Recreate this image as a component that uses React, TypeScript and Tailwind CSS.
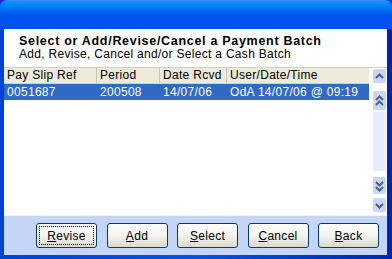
import React from "react";

function Chevron({ dir, double }: { dir: "up" | "down"; double?: boolean }) {
  const single = dir === "up" ? "M3 7 L6.5 3.5 L10 7" : "M3 4 L6.5 7.5 L10 4";
  if (!double) {
    return (
      <svg width="13" height="11" viewBox="0 0 13 11">
        <path d={single} fill="none" stroke="#4d6185" strokeWidth="2" />
      </svg>
    );
  }
  const a = dir === "up" ? "M3 7 L6.5 3.5 L10 7" : "M3 4 L6.5 7.5 L10 4";
  const b = dir === "up" ? "M3 12 L6.5 8.5 L10 12" : "M3 9 L6.5 12.5 L10 9";
  return (
    <svg width="13" height="16" viewBox="0 0 13 16">
      <path d={a} fill="none" stroke="#4d6185" strokeWidth="2" />
      <path d={b} fill="none" stroke="#4d6185" strokeWidth="2" />
    </svg>
  );
}

function Btn({ label, u, focus }: { label: string; u: number; focus?: boolean }) {
  return (
    <div className="w-[61px] h-[25px] rounded-[3px] border border-[#003c74] bg-gradient-to-b from-[#ffffff] via-[#f4f3ee] to-[#dcd9cc] flex items-center justify-center p-[2px]">
      <div
        className={
          "w-full h-full flex items-center justify-center text-[12px] tracking-[0.3px] text-black " +
          (focus ? "border border-dotted border-black" : "")
        }
      >
        <span>
          {label.slice(0, u)}
          <span className="underline">{label.slice(u, u + 1)}</span>
          {label.slice(u + 1)}
        </span>
      </div>
    </div>
  );
}

export default function App() {
  return (
    <div
      className="w-[392px] h-[259px] flex flex-col overflow-hidden bg-[#0831d9]"
      style={{ fontFamily: '"Liberation Sans", Arial, sans-serif' }}
    >
      <div className="h-[29px] shrink-0 rounded-t-[7px] bg-gradient-to-b from-[#0997ff] via-[#0053ee] to-[#0050ee] border-t border-[#3b8cf5]" />
      <div className="flex-1 flex flex-col pl-[4px] pr-[5px] pb-[4px] bg-gradient-to-r from-[#0041d8] via-[#0054e3] to-[#0025b0]">
        <div className="h-[38px] bg-white pl-[15px] pt-[6px] leading-[13px]">
          <div className="text-[12.5px] font-bold tracking-[0.7px] text-black">Select or Add/Revise/Cancel a Payment Batch</div>
          <div className="text-[12px] tracking-[0.3px] text-black">Add, Revise, Cancel and/or Select a Cash Batch</div>
        </div>
        <div className="h-[148px] bg-white flex border-t border-[#d4d0c8]">
          <div className="flex-1 flex flex-col text-[12px] tracking-[0.3px]">
            <div className="h-[16px] flex bg-[#ebeadb] border-b border-[#d6d2c2] text-black leading-[15px]">
              <div className="w-[93px] pl-[3px] border-r border-[#c7c5b2]">Pay Slip Ref</div>
              <div className="w-[63px] pl-[3px] border-r border-[#c7c5b2]">Period</div>
              <div className="w-[67px] pl-[3px] border-r border-[#c7c5b2]">Date Rcvd</div>
              <div className="flex-1 pl-[3px]">User/Date/Time</div>
            </div>
            <div className="h-[16px] flex bg-[#316ac5] text-white leading-[16px]">
              <div className="w-[93px] pl-[3px]">0051687</div>
              <div className="w-[63px] pl-[3px]">200508</div>
              <div className="w-[67px] pl-[3px]">14/07/06</div>
              <div className="flex-1 pl-[3px]">OdA 14/07/06 @ 09:19</div>
            </div>
          </div>
          <div className="w-[18px] flex flex-col items-center pt-[1px] pb-[3px] pl-[2px]">
            <div className="w-[13px] h-[14px] bg-[#c8d7f9] rounded-[2px] flex items-center justify-center">
              <Chevron dir="up" />
            </div>
            <div className="h-[8px]" />
            <div className="w-[13px] h-[19px] bg-[#c8d7f9] rounded-[2px] flex items-center justify-center">
              <Chevron dir="up" double />
            </div>
            <div className="w-[13px] flex-1 bg-[#e6ecfb] mt-[2px] mb-[6px]" />
            <div className="w-[13px] h-[17px] bg-[#c8d7f9] rounded-[2px] flex items-center justify-center">
              <Chevron dir="down" double />
            </div>
            <div className="h-[4px]" />
            <div className="w-[13px] h-[14px] bg-[#c8d7f9] rounded-[2px] flex items-center justify-center">
              <Chevron dir="down" />
            </div>
          </div>
        </div>
        <div className="flex-1 bg-[#c4d5f5] border-t border-[#eef3fd] flex items-center pl-[32px] gap-[9.5px]">
          <Btn label="Revise" u={0} focus />
          <Btn label="Add" u={0} />
          <Btn label="Select" u={0} />
          <Btn label="Cancel" u={0} />
          <Btn label="Back" u={0} />
        </div>
      </div>
    </div>
  );
}
